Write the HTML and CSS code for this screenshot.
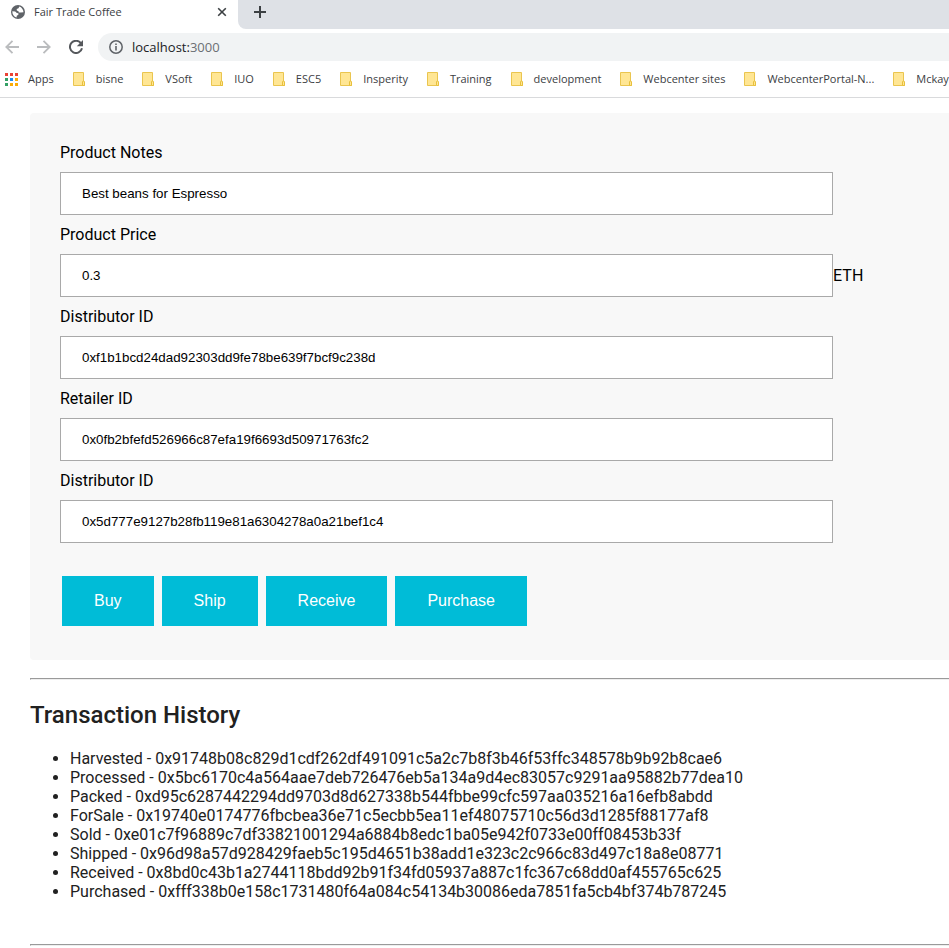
FILE: index.html
```html
<!DOCTYPE html>
<html lang="en">
<head>
<meta charset="utf-8">
<title>Fair Trade Coffee</title>
<link rel="stylesheet" href="styles.css">
</head>
<body>
<svg class="defs" width="0" height="0" aria-hidden="true">
  <symbol id="folder" viewBox="0 0 13 14">
    <path d="M.5 .5h10v10.5l1 1v1.5H.5z" fill="#ffe694" stroke="#eac54f"/>
    <path d="M9.5 13.500v-3.500q0-1 1-1t1 1v3.500z" fill="#ffe694" stroke="#e8c03c"/>
  </symbol>
</svg>
<header class="browser">
  <div class="tabs">
    <div class="tab">
      <svg class="globe" viewBox="0 0 14 14" width="14" height="14" aria-hidden="true">
        <circle cx="7" cy="7" r="7" fill="#5f6368"/>
        <path d="M8.300 1.500 7.500 3.300 5.700 4 5.800 5.500 7.500 6.200 7.800 7.400 9.800 7.600 12.500 7.300C12.300 4.500 10.700 2.300 8.300 1.500z" fill="#fff"/>
        <path d="M1.300 6.300 4.200 6.600 5.800 8 7.400 8.300 7.400 9.800 5.800 10.700 5.500 12.600C3 11.800 1.200 9.500 1.300 6.300z" fill="#fff"/>
      </svg>
      <span class="tab-title">Fair Trade Coffee</span>
      <button class="icon-button" aria-label="Close tab">
        <svg viewBox="0 0 10 10" width="10" height="10"><path d="M1.200 1.200l7.600 7.600M8.800 1.200l-7.600 7.600" stroke="#3c4043" stroke-width="1.600"/></svg>
      </button>
    </div>
    <div class="tab-strip">
      <button class="icon-button" aria-label="New tab">
        <svg viewBox="0 0 12 12" width="12" height="12"><path d="M6 0v12M0 6h12" stroke="#3c4043" stroke-width="2"/></svg>
      </button>
    </div>
  </div>
  <div class="toolbar">
    <button class="icon-button" aria-label="Back">
      <svg viewBox="0 0 14 14" width="14" height="14"><path d="M14 7H1.500M7.500 .8 1.300 7l6.200 6.200" fill="none" stroke="#babcbe" stroke-width="1.800"/></svg>
    </button>
    <button class="icon-button" aria-label="Forward">
      <svg viewBox="0 0 14 14" width="14" height="14"><path d="M0 7h12.500M6.500 .8 12.700 7l-6.200 6.200" fill="none" stroke="#babcbe" stroke-width="1.800"/></svg>
    </button>
    <button class="icon-button" aria-label="Reload">
      <svg viewBox="0 0 14 14" width="14" height="14"><path d="M12 3.300A6.100 6.100 0 1 0 13 8.300" fill="none" stroke="#55585c" stroke-width="2"/><path d="M14 0v6.200H7.800z" fill="#55585c"/></svg>
    </button>
    <div class="address">
      <svg viewBox="0 0 14 14" width="14" height="14" aria-hidden="true"><circle cx="7" cy="7" r="6.200" fill="none" stroke="#5f6368" stroke-width="1.500"/><path d="M7 6v4.500M7 3.400v1.600" stroke="#5f6368" stroke-width="1.600"/></svg>
      <span class="url">localhost:<span class="port">3000</span></span>
    </div>
  </div>
  <nav class="bookmarks" aria-label="Bookmarks">
    <a href="#"><svg viewBox="0 0 13 13" width="13" height="13" aria-hidden="true">
      <path d="M0 0h3v3H0zM5 0h3v3H5zM10 0h3v3h-3z" fill="#ea4335"/>
      <path d="M0 5h3v3H0zM0 10h3v3H0z" fill="#34a065"/><path d="M5 5h3v3H5z" fill="#1a8cf0"/>
      <path d="M10 5h3v3h-3zM5 10h3v3H5zM10 10h3v3h-3z" fill="#fbab05"/></svg>Apps</a>
    <a href="#"><svg class="folder"><use href="#folder"/></svg>bisne</a>
    <a href="#"><svg class="folder"><use href="#folder"/></svg>VSoft</a>
    <a href="#"><svg class="folder"><use href="#folder"/></svg>IUO</a>
    <a href="#"><svg class="folder"><use href="#folder"/></svg>ESC5</a>
    <a href="#"><svg class="folder"><use href="#folder"/></svg>Insperity</a>
    <a href="#"><svg class="folder"><use href="#folder"/></svg>Training</a>
    <a href="#"><svg class="folder"><use href="#folder"/></svg>development</a>
    <a href="#"><svg class="folder"><use href="#folder"/></svg>Webcenter sites</a>
    <a href="#"><svg class="folder"><use href="#folder"/></svg>WebcenterPortal-N...</a>
    <a href="#"><svg class="folder"><use href="#folder"/></svg>Mckay</a>
  </nav>
</header>
<main class="page">
  <form class="panel">
    <label for="notes">Product Notes</label>
    <div class="field"><input id="notes" type="text" value="Best beans for Espresso"></div>
    <label for="price">Product Price</label>
    <div class="field"><input id="price" type="text" value="0.3"><span>ETH</span></div>
    <label for="distributor">Distributor ID</label>
    <div class="field"><input id="distributor" type="text" value="0xf1b1bcd24dad92303dd9fe78be639f7bcf9c238d"></div>
    <label for="retailer">Retailer ID</label>
    <div class="field"><input id="retailer" type="text" value="0x0fb2bfefd526966c87efa19f6693d50971763fc2"></div>
    <label for="consumer">Distributor ID</label>
    <div class="field"><input id="consumer" type="text" value="0x5d777e9127b28fb119e81a6304278a0a21bef1c4"></div>
    <div class="actions">
      <button type="button">Buy</button>
      <button type="button">Ship</button>
      <button type="button">Receive</button>
      <button type="button">Purchase</button>
    </div>
  </form>
  <hr>
  <section class="history">
    <h2>Transaction History</h2>
    <ul>
      <li>Harvested - 0x91748b08c829d1cdf262df491091c5a2c7b8f3b46f53ffc348578b9b92b8cae6</li>
      <li>Processed - 0x5bc6170c4a564aae7deb726476eb5a134a9d4ec83057c9291aa95882b77dea10</li>
      <li>Packed - 0xd95c6287442294dd9703d8d627338b544fbbe99cfc597aa035216a16efb8abdd</li>
      <li>ForSale - 0x19740e0174776fbcbea36e71c5ecbb5ea11ef48075710c56d3d1285f88177af8</li>
      <li>Sold - 0xe01c7f96889c7df33821001294a6884b8edc1ba05e942f0733e00ff08453b33f</li>
      <li>Shipped - 0x96d98a57d928429faeb5c195d4651b38add1e323c2c966c83d497c18a8e08771</li>
      <li>Received - 0x8bd0c43b1a2744118bdd92b91f34fd05937a887c1fc367c68dd0af455765c625</li>
      <li>Purchased - 0xfff338b0e158c1731480f64a084c54134b30086eda7851fa5cb4bf374b787245</li>
    </ul>
  </section>
  <hr>
</main>
</body>
</html>
```
FILE: styles.css
```css
* { box-sizing: border-box; }

body {
  margin: 0;
  background: #fff;
  color: #212121;
  font: 16px/19px Roboto, "Liberation Sans", sans-serif;
}

.defs { position: absolute; }
svg { display: block; flex: none; }
button { border: 0; cursor: pointer; }

.browser {
  overflow: hidden;
  border-bottom: 1px solid #d9dadc;
  color: #3c4043;
  font: 11px/16px "Open Sans", "Noto Sans", sans-serif;
}

.icon-button {
  display: flex;
  padding: 0;
  background: none;
}

.tabs { display: flex; height: 29px; }

.tab {
  display: flex;
  align-items: center;
  flex: none;
  gap: 9px;
  width: 238px;
  padding: 0 11px 5px;
}

.tab-title { flex: 1; }

.tab-strip {
  display: flex;
  align-items: center;
  flex: 1;
  padding: 0 16px 5px;
  border-bottom-left-radius: 8px;
  background: #dee1e6;
}

.toolbar {
  display: flex;
  align-items: center;
  gap: 18px;
  padding: 4px 0 4px 5px;
}

.address {
  display: flex;
  align-items: center;
  flex: 1;
  gap: 9px;
  height: 28px;
  margin-left: -3px;
  padding-left: 11px;
  border-radius: 14px 0 0 14px;
  background: #f1f3f4;
  color: #202124;
  font-size: 13px;
}

.port { color: #6b6f73; }

.bookmarks {
  display: flex;
  gap: 19px;
  height: 32px;
  padding-left: 5px;
}

.bookmarks a {
  display: flex;
  align-items: center;
  flex: none;
  gap: 10px;
  height: 28px;
  color: inherit;
  text-decoration: none;
}

.folder { width: 13px; height: 14px; }

.page { padding: 15px 0 0 30px; }

.panel {
  padding: 30px 30px 34px;
  border-radius: 4px 0 0 4px;
  background: #f8f8f8;
  color: #000;
}

.panel label { display: block; }

.field {
  display: flex;
  align-items: center;
  margin: 10px 0;
}

.field input {
  width: 90%;
  height: 43px;
  padding: 12px 21px;
  border: 1px solid #a9a9a9;
  border-radius: 0;
  background: #fff;
  color: #000;
  font-family: "Liberation Sans", sans-serif;
}

.actions {
  display: flex;
  gap: 8px;
  margin-top: 33px;
  padding-left: 2px;
}

.actions button {
  height: 50px;
  padding: 0 32px;
  background: #00bcd7;
  color: #fff;
  font: 16px "Liberation Sans", sans-serif;
}

hr {
  height: 2px;
  margin: 18px 0;
  border: 1px solid #eee;
  border-top-color: #9a9a9a;
  border-right: 0;
  border-left-color: #9a9a9a;
}

.history h2 {
  margin: 21px 0 19px;
  font-size: 24px;
  font-weight: 500;
  line-height: 29px;
}

.history ul {
  margin: 0 0 43px;
  padding-left: 40px;
}
```
